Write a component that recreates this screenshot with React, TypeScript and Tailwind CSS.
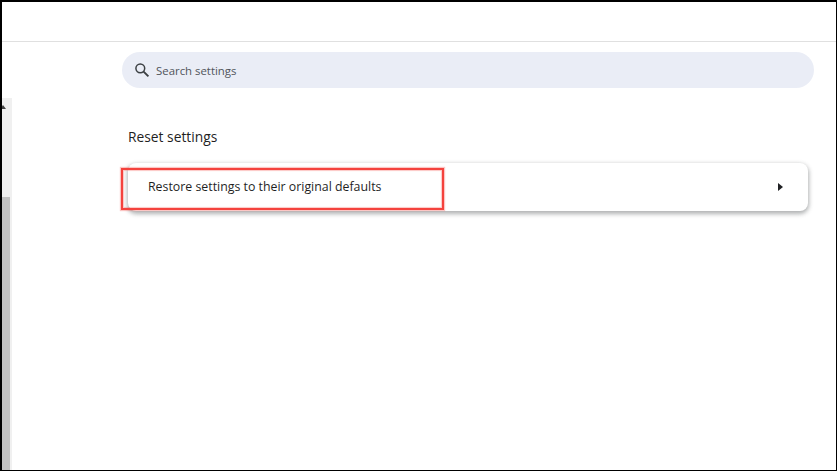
function SearchIcon() {
  return (
    <svg width="16" height="16" viewBox="0 0 16 16" fill="none" className="shrink-0 text-[#3c4043]">
      <circle cx="6.3" cy="6.3" r="4.4" stroke="currentColor" strokeWidth="1.5" />
      <path d="M9.6 9.6 14.4 14.4" stroke="currentColor" strokeWidth="1.9" />
    </svg>
  );
}

function Scrollbar() {
  return (
    <div className="mt-[56px] flex w-[10px] shrink-0 flex-col bg-[#f0f0f0]">
      <div className="mt-[7px] -ml-[2px] h-0 w-0 border-x-[3px] border-b-[4px] border-x-transparent border-b-[#404040]" />
      <div className="mt-[88px] w-[8px] flex-1 bg-[#c1c1c1]" />
    </div>
  );
}

export default function App() {
  return (
    <div className="flex h-[471px] w-[837px] flex-col overflow-hidden border-t-2 border-r-[1px] border-b-[1px] border-l-2 border-black bg-white font-['Open_Sans',sans-serif]">
      <header className="h-[40px] shrink-0 border-b border-[#e0e0e0]" />
      <div className="flex flex-1">
        <Scrollbar />
        <main className="ml-[110px] w-[692px] pt-[10px]">
          <div className="flex h-[36px] items-center rounded-full bg-[#eaedf6] pl-[12px]">
            <SearchIcon />
            <span className="mt-[1px] ml-[6px] text-[11.4px] text-[#50545a]">Search settings</span>
          </div>
          <h2 className="mt-[40px] ml-[6px] text-[13.8px] leading-[18px] text-[#1f1f1f]">Reset settings</h2>
          <div className="relative mt-[17px] ml-[6px] flex h-[48px] w-[680px] items-center justify-between rounded-[8px] bg-white pr-[25px] pl-[20px] shadow-[0_2px_4px_1px_rgba(60,64,67,0.4)]">
            <span className="text-[12.35px] text-[#1f1f1f]">Restore settings to their original defaults</span>
            <span className="h-0 w-0 border-y-[4.5px] border-l-[5px] border-y-transparent border-l-[#202124]" />
            <div className="absolute top-[5px] left-[-7px] h-[42px] w-[323px] border-[2px] border-[#f4423d] shadow-[0_0_1px_1px_rgba(244,66,61,0.3),inset_0_0_1px_1px_rgba(244,66,61,0.3)]" />
          </div>
        </main>
      </div>
    </div>
  );
}
